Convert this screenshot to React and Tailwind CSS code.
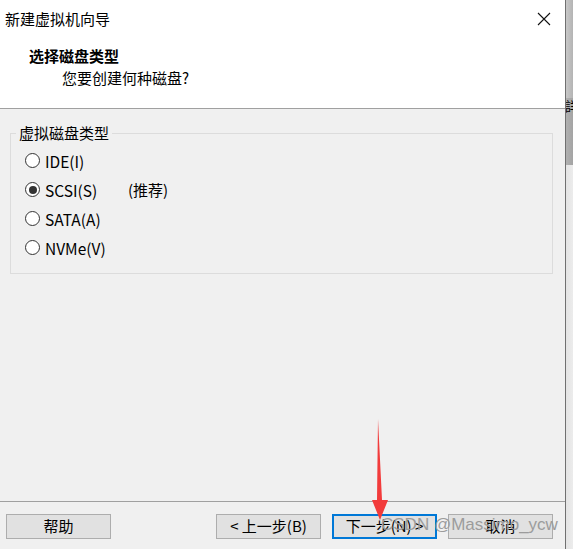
import React from "react";

const ui = { fontFamily: '"Noto Sans CJK SC", "Noto Sans", sans-serif' };

const options = [
  { label: "IDE(I)", checked: false },
  { label: "SCSI(S)", checked: true, note: "(推荐)" },
  { label: "SATA(A)", checked: false },
  { label: "NVMe(V)", checked: false },
];

function Radio({ checked }) {
  return (
    <span className="flex h-[15px] w-[15px] shrink-0 items-center justify-center rounded-full border border-[#333] bg-white">
      {checked && <span className="h-[8px] w-[8px] rounded-full bg-[#333]" />}
    </span>
  );
}

function Button({ children, primary }) {
  return (
    <button
      className={
        primary
          ? "flex h-[25px] w-[105px] items-center justify-center border-2 border-[#0078d7] bg-[#e1e1e1] text-[15px] text-black"
          : "flex h-[25px] w-[105px] items-center justify-center border border-[#adadad] bg-[#e1e1e1] text-[15px] text-black"
      }
    >
      {children}
    </button>
  );
}

export default function App() {
  return (
    <div className="relative flex h-[549px] w-[573px] overflow-hidden bg-[#f0f0f0]" style={ui}>
      {/* dialog */}
      <div className="flex w-[565px] flex-col">
        <div className="h-[108px] bg-white">
          <div className="flex h-[38px] items-center justify-between pl-[5px] pr-[14px]">
            <span className="text-[15px] leading-5 text-black">新建虚拟机向导</span>
            <svg width="14" height="14" viewBox="0 0 14 14" aria-hidden>
              <path d="M1 1l12 12M13 1L1 13" stroke="#111" strokeWidth="1.1" />
            </svg>
          </div>
          <div className="mt-[8px] pl-[29px] text-[15px] font-bold leading-5 text-black">选择磁盘类型</div>
          <div className="mt-[2px] pl-[62px] text-[15px] leading-5 text-black">您要创建何种磁盘?</div>
        </div>
        <div className="h-px bg-[#a0a0a0]" />

        <div className="flex-1 px-[10px] pt-[14px]">
          <fieldset className="h-[151px] w-[543px] border border-[#dcdcdc] pl-[14px] pr-[15px]">
            <legend className="ml-[-9px] px-[3px] text-[15px] leading-5 text-black">虚拟磁盘类型</legend>
            <div className="mt-[3px] flex flex-col">
              {options.map((o) => (
                <div key={o.label} className="flex h-[29px] items-center">
                  <Radio checked={o.checked} />
                  <span className="ml-[5px] w-[83px] text-[15.5px] leading-5 text-black">{o.label}</span>
                  {o.note && <span className="text-[15px] leading-5 text-black">{o.note}</span>}
                </div>
              ))}
            </div>
          </fieldset>
        </div>

        <div className="h-px bg-[#a0a0a0]" />
        <div className="flex h-[47px] items-start pt-[12px] pl-[6px]">
          <Button>帮助</Button>
          <div className="ml-[105px] flex gap-[11px]">
            <Button>&lt; 上一步(B)</Button>
            <Button primary>下一步(N) &gt;</Button>
            <Button>取消</Button>
          </div>
        </div>
      </div>

      {/* background window strip */}
      <div className="flex w-[8px] flex-col border-l border-[#707070]">
        <div className="h-[98px] bg-gradient-to-r from-[#c8c8c8] to-[#b4b4b4]" />
        <div className="relative h-[67px] overflow-hidden bg-gradient-to-r from-[#b0b0b0] to-[#a4a4a4]">
          <span className="absolute left-[-1px] top-0 text-[13px] leading-4 text-black">詳</span>
        </div>
        <div className="flex-1 bg-gradient-to-r from-[#e4e4e4] to-[#ececec]" />
      </div>

      {/* annotation arrow */}
      <svg className="absolute left-[368px] top-[418px]" width="24" height="104" viewBox="0 0 24 104" aria-hidden>
        <polygon points="10,1 14,82 20,82 12,102 4,82 9,82" fill="#f23b3b" />
      </svg>

      {/* watermark */}
      <span
        className="absolute left-[381px] top-[515px] text-[17px] leading-5 text-[#9c9c9c]"
        style={{ fontFamily: '"Liberation Sans", Arial, sans-serif' }}
      >
        CSDN @Massimo_ycw
      </span>
    </div>
  );
}
